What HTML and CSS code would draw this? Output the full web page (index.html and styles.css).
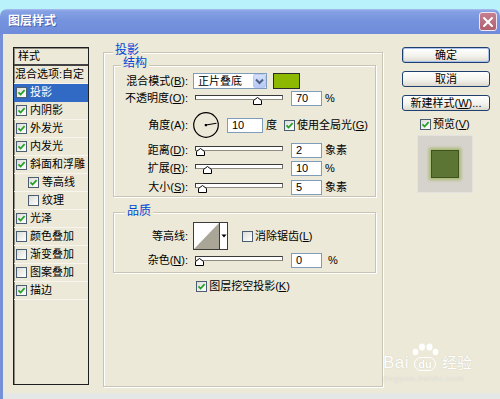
FILE: index.html
```html
<!DOCTYPE html>
<html>
<head>
<meta charset="utf-8">
<title>图层样式</title>
<link rel="stylesheet" href="styles.css">
</head>
<body>
<div class="window">
  <div class="titlebar">
    <span class="title">图层样式</span>
    <span class="close"><svg width="12" height="12" viewBox="0 0 12 12"><path d="M2 2 L10 10 M10 2 L2 10" stroke="#fff" stroke-width="2" stroke-linecap="round"/></svg></span>
  </div>
  <div class="client">
    <div class="list">
      <div class="list-head">样式</div>
      <div class="item plain">混合选项:自定</div>
      <div class="item sel"><span class="cb"><svg viewBox="0 0 9 9" width="9" height="9"><path d="M1.5 4.3 L3.6 6.5 L7.6 2.2" fill="none" stroke="#21a121" stroke-width="1.7"/></svg></span>投影</div>
      <div class="item"><span class="cb"><svg viewBox="0 0 9 9" width="9" height="9"><path d="M1.5 4.3 L3.6 6.5 L7.6 2.2" fill="none" stroke="#21a121" stroke-width="1.7"/></svg></span>内阴影</div>
      <div class="item"><span class="cb"><svg viewBox="0 0 9 9" width="9" height="9"><path d="M1.5 4.3 L3.6 6.5 L7.6 2.2" fill="none" stroke="#21a121" stroke-width="1.7"/></svg></span>外发光</div>
      <div class="item"><span class="cb"><svg viewBox="0 0 9 9" width="9" height="9"><path d="M1.5 4.3 L3.6 6.5 L7.6 2.2" fill="none" stroke="#21a121" stroke-width="1.7"/></svg></span>内发光</div>
      <div class="item"><span class="cb"><svg viewBox="0 0 9 9" width="9" height="9"><path d="M1.5 4.3 L3.6 6.5 L7.6 2.2" fill="none" stroke="#21a121" stroke-width="1.7"/></svg></span>斜面和浮雕</div>
      <div class="item sub"><span class="cb"><svg viewBox="0 0 9 9" width="9" height="9"><path d="M1.5 4.3 L3.6 6.5 L7.6 2.2" fill="none" stroke="#21a121" stroke-width="1.7"/></svg></span>等高线</div>
      <div class="item sub"><span class="cb"></span>纹理</div>
      <div class="item"><span class="cb"><svg viewBox="0 0 9 9" width="9" height="9"><path d="M1.5 4.3 L3.6 6.5 L7.6 2.2" fill="none" stroke="#21a121" stroke-width="1.7"/></svg></span>光泽</div>
      <div class="item"><span class="cb"></span>颜色叠加</div>
      <div class="item"><span class="cb"></span>渐变叠加</div>
      <div class="item"><span class="cb"></span>图案叠加</div>
      <div class="item"><span class="cb"><svg viewBox="0 0 9 9" width="9" height="9"><path d="M1.5 4.3 L3.6 6.5 L7.6 2.2" fill="none" stroke="#21a121" stroke-width="1.7"/></svg></span>描边</div>
    </div>

    <div class="panel">
      <span class="legend lg-main">投影</span>
      <div class="group g1">
        <span class="legend lg-struct">结构</span>
        <div class="row r1">
          <span class="lbl">混合模式(<u>B</u>):</span>
          <span class="select"><span class="sel-text">正片叠底</span><span class="sel-btn"><svg width="9" height="7" viewBox="0 0 9 7"><path d="M1 1.5 L4.5 5 L8 1.5" fill="none" stroke="#4d6185" stroke-width="2"/></svg></span></span>
          <span class="swatch"></span>
        </div>
        <div class="row r2">
          <span class="lbl">不透明度(<u>O</u>):</span>
          <span class="slider"><span class="track"></span><svg class="thumb" style="left:58px" width="9" height="8" viewBox="0 0 9 8"><path d="M0.5 7.5 L0.5 3.5 L4.5 0.5 L8.5 3.5 L8.5 7.5 Z" fill="#fff" stroke="#000"/></svg></span>
          <span class="num">70</span><span class="unit">%</span>
        </div>
        <div class="row r3">
          <span class="lbl">角度(A):</span>
          <svg class="dial" width="26" height="26" viewBox="0 0 26 26"><circle cx="13" cy="13" r="12.3" fill="none" stroke="#000" stroke-width="1.2"/><path d="M13 13 L23.5 11.2" stroke="#000" stroke-width="1.1"/><rect x="11.8" y="12" width="2.2" height="2.2" fill="#000"/></svg>
          <span class="num wide">10</span><span class="unit">度</span>
          <span class="cb gl"><svg viewBox="0 0 9 9" width="9" height="9"><path d="M1.5 4.3 L3.6 6.5 L7.6 2.2" fill="none" stroke="#21a121" stroke-width="1.7"/></svg></span><span class="cbtext">使用全局光(<u>G</u>)</span>
        </div>
        <div class="row r4">
          <span class="lbl">距离(<u>D</u>):</span>
          <span class="slider"><span class="track"></span><svg class="thumb" style="left:1px" width="9" height="8" viewBox="0 0 9 8"><path d="M0.5 7.5 L0.5 3.5 L4.5 0.5 L8.5 3.5 L8.5 7.5 Z" fill="#fff" stroke="#000"/></svg></span>
          <span class="num">2</span><span class="unit">象素</span>
        </div>
        <div class="row r5">
          <span class="lbl">扩展(<u>R</u>):</span>
          <span class="slider"><span class="track"></span><svg class="thumb" style="left:8px" width="9" height="8" viewBox="0 0 9 8"><path d="M0.5 7.5 L0.5 3.5 L4.5 0.5 L8.5 3.5 L8.5 7.5 Z" fill="#fff" stroke="#000"/></svg></span>
          <span class="num">10</span><span class="unit">%</span>
        </div>
        <div class="row r6">
          <span class="lbl">大小(<u>S</u>):</span>
          <span class="slider"><span class="track"></span><svg class="thumb" style="left:3px" width="9" height="8" viewBox="0 0 9 8"><path d="M0.5 7.5 L0.5 3.5 L4.5 0.5 L8.5 3.5 L8.5 7.5 Z" fill="#fff" stroke="#000"/></svg></span>
          <span class="num">5</span><span class="unit">象素</span>
        </div>
      </div>

      <div class="group g2">
        <span class="legend lg-quality">品质</span>
        <div class="row q1">
          <span class="lbl">等高线:</span>
          <span class="contour"><svg width="25" height="26" viewBox="0 0 25 26" preserveAspectRatio="none"><polygon points="0,26 25,0 25,26" fill="#a9a698"/></svg></span><span class="contour-btn"><svg width="6" height="4" viewBox="0 0 6 4"><path d="M0.5 0.5 L5.5 0.5 L3 3.5 Z" fill="#000"/></svg></span>
          <span class="cb aa"></span><span class="cbtext">消除锯齿(<u>L</u>)</span>
        </div>
        <div class="row q2">
          <span class="lbl">杂色(<u>N</u>):</span>
          <span class="slider"><span class="track"></span><svg class="thumb" style="left:0px" width="9" height="8" viewBox="0 0 9 8"><path d="M0.5 7.5 L0.5 3.5 L4.5 0.5 L8.5 3.5 L8.5 7.5 Z" fill="#fff" stroke="#000"/></svg></span>
          <span class="num">0</span><span class="unit pct">%</span>
        </div>
      </div>

      <div class="knock">
        <span class="cb"><svg viewBox="0 0 9 9" width="9" height="9"><path d="M1.5 4.3 L3.6 6.5 L7.6 2.2" fill="none" stroke="#21a121" stroke-width="1.7"/></svg></span><span class="cbtext">图层挖空投影(<u>K</u>)</span>
      </div>
    </div>

    <div class="side">
      <div class="btn def">确定</div>
      <div class="btn">取消</div>
      <div class="btn">新建样式(<u>W</u>)...</div>
      <div class="pv"><span class="cb"><svg viewBox="0 0 9 9" width="9" height="9"><path d="M1.5 4.3 L3.6 6.5 L7.6 2.2" fill="none" stroke="#21a121" stroke-width="1.7"/></svg></span><span class="cbtext">预览(<u>V</u>)</span></div>
      <div class="preview"><span class="thumbnail"></span></div>
    </div>
  </div>
  <div class="bottom"></div>

  <div class="wm">
    <div class="wm-main">
      <span class="wm-bai">Bai</span>
      <span class="paw">
        <svg width="28" height="13" viewBox="0 0 28 13"><ellipse cx="4.5" cy="9" rx="2.8" ry="3.3" fill="#fff"/><ellipse cx="11" cy="4" rx="3" ry="3.6" fill="#fff"/><ellipse cx="18.5" cy="4" rx="3" ry="3.6" fill="#fff"/><ellipse cx="24.5" cy="9" rx="2.8" ry="3.3" fill="#fff"/></svg>
        <span class="du">du</span>
      </span>
      <span class="wm-jy">经验</span>
    </div>
    <div class="wm-url">jingyan.baidu.com</div>
  </div>
</div>
</body>
</html>
```

FILE: styles.css
```css
* { box-sizing: border-box; }
html, body { margin: 0; padding: 0; }
body {
  width: 500px;
  height: 399px;
  overflow: hidden;
  background: #b9f2fb;
  font-family: "Liberation Sans", "Noto Sans CJK SC", sans-serif;
  font-size: 11px;
  line-height: 13px;
  color: #000;
}
u { text-decoration: underline; }

.window {
  position: relative;
  margin-top: 9px;
  height: 390px;
  display: flex;
  flex-direction: column;
}
.titlebar {
  height: 25px;
  flex: none;
  border-radius: 7px 7px 0 0;
  background: linear-gradient(#a8bdf0 0, #86a2e4 2px, #7693de 45%, #6e8cda 100%);
  display: flex;
  align-items: center;
  justify-content: space-between;
  padding: 0 3px 0 8px;
}
.title {
  color: #fff;
  font-weight: bold;
  font-size: 12px;
  text-shadow: 1px 1px 0 #4a62b0;
}
.close {
  width: 18px;
  height: 19px;
  border: 1px solid #efe6ee;
  border-radius: 3px;
  background: linear-gradient(#c58090, #b0606f);
  display: flex;
  align-items: center;
  justify-content: center;
}
.client {
  height: 359px;
  flex: none;
  display: flex;
  align-items: flex-start;
  background: #ece9d8;
  border-left: 3px solid #7590d6;
}
.bottom {
  height: 6px;
  flex: none;
  background: #e5e6e6;
  border-left: 3px solid #7590d6;
}

/* left style list */
.list {
  flex: none;
  margin: 13px 0 0 10px;
  width: 76px;
  height: 338px;
  border: 1px solid #1e1e1e;
  box-shadow: inset 1px 1px 0 #8c8a7e;
  background: #ece9d8;
}
.list-head {
  height: 18px;
  padding-left: 4px;
  display: flex;
  align-items: center;
  border-bottom: 2px solid #434343;
}
.item {
  height: 18px;
  display: flex;
  align-items: center;
  padding-left: 2px;
  border-bottom: 1px solid #f7f5ee;
  white-space: nowrap;
}
.item.plain { padding-left: 1px; }
.item.sub { padding-left: 14px; }
.item.sel { background: #316ac5; color: #fff; border-bottom-color: #316ac5; }
.item .cb { margin-right: 3px; }

.cb {
  flex: none;
  width: 11px;
  height: 11px;
  border: 1px solid #4b5d70;
  background: linear-gradient(135deg, #dcdcd6, #ffffff);
  display: inline-flex;
  align-items: center;
  justify-content: center;
}
.cbtext { margin-left: 2px; white-space: nowrap; }

/* main panel */
.panel {
  position: relative;
  flex: none;
  margin: 18px 0 0 14px;
  width: 280px;
  height: 335px;
  border: 1px solid #c8c5b5;
  box-shadow: inset 1px 1px 0 #fff, 1px 1px 0 #fff;
}
.legend {
  position: absolute;
  top: -9px;
  left: 9px;
  padding: 0 2px;
  background: #ece9d8;
  color: #0046d5;
  font-size: 12px;
  line-height: 13px;
}
.lg-struct { left: 7px; }
.lg-quality { left: 11px; top: -8px; }

.group {
  position: relative;
  margin: 12px 6px 0 9px;
  border: 1px solid #c8c5b5;
  box-shadow: inset 1px 1px 0 #fff, 1px 1px 0 #fff;
}
.g1 { height: 132px; padding-top: 6px; }
.g2 { height: 61px; padding-top: 9px; margin-top: 15px; }

.row {
  display: flex;
  align-items: center;
  height: 18px;
  white-space: nowrap;
}
.r2 { height: 17px; }
.r3 { height: 30px; margin-top: 3px; }
.r4 { margin-top: 1px; }
.r6 { margin-top: 1px; }
.q1 { height: 28px; }
.q2 { margin-top: 1px; }

.lbl {
  flex: none;
  width: 74px;
  text-align: right;
}
.select {
  flex: none;
  margin-left: 5px;
  width: 74px;
  height: 16px;
  border: 1px solid #7f9db9;
  background: #fff;
  display: flex;
  align-items: center;
  justify-content: space-between;
}
.sel-text { padding-left: 4px; }
.sel-btn {
  width: 13px;
  height: 14px;
  background: linear-gradient(#d4e0fb, #b6c9f5);
  border: 1px solid #b9cbf3;
  border-radius: 2px;
  display: flex;
  align-items: center;
  justify-content: center;
}
.swatch {
  flex: none;
  margin-left: 6px;
  width: 27px;
  height: 16px;
  background: #8cb800;
  border: 1px solid #2b2b2b;
}
.slider {
  position: relative;
  flex: none;
  margin-left: 7px;
  width: 88px;
  height: 12px;
}
.track {
  display: block;
  margin-top: 2px;
  height: 5px;
  background: #fff;
  border: 1px solid #3a3a3a;
  border-bottom-color: #8e8c80;
  border-right-color: #6a6a6a;
}
.thumb {
  position: absolute;
  top: 4px;
}
.num {
  flex: none;
  margin-left: 8px;
  width: 31px;
  height: 15px;
  border: 1px solid #7f9db9;
  background: #fff;
  padding-left: 4px;
  line-height: 13px;
}
.num.wide { width: 36px; }
.unit { margin-left: 3px; }
.unit.pct { margin-left: 6px; }
.dial { flex: none; margin-left: 5px; }
.cb.gl { margin-left: 7px; }

.contour {
  flex: none;
  margin-left: 5px;
  width: 27px;
  height: 28px;
  border: 1px solid #3c3c3c;
  background: #fff;
  display: block;
}
.contour svg { display: block; }
.contour-btn {
  flex: none;
  width: 8px;
  height: 28px;
  border: 1px solid #3c3c3c;
  border-left: none;
  background: #fff;
  display: flex;
  align-items: center;
  justify-content: center;
}
.cb.aa { margin-left: 14px; }

.knock {
  display: flex;
  align-items: center;
  justify-content: center;
  height: 12px;
  margin-top: 7px;
}

/* right column */
.side {
  flex: none;
  margin: 13px 0 0 19px;
  width: 88px;
}
.btn {
  height: 16px;
  margin-bottom: 8px;
  border: 1px solid #1f3f6e;
  border-radius: 3px;
  background: linear-gradient(#ffffff, #f4f3ee 55%, #dcd9cd);
  display: flex;
  align-items: center;
  justify-content: center;
  white-space: nowrap;
}
.btn.def { box-shadow: inset 0 0 0 1px #a9c1ef; }
.pv {
  display: flex;
  align-items: center;
  height: 11px;
  margin-top: 2px;
  padding-left: 18px;
}
.preview {
  margin: 5px 0 0 15px;
  width: 56px;
  height: 58px;
  background: #d6d3cc;
  border: 1px solid #e4e2dc;
  display: flex;
  align-items: center;
  justify-content: center;
}
.thumbnail {
  width: 28px;
  height: 28px;
  background: #5c7434;
  border: 1px solid #3f5220;
  box-shadow: 0 0 3px 2px #a6b870;
}

/* watermark */
.wm {
  position: absolute;
  left: 383px;
  top: 334px;
  color: #fff;
  text-shadow: 0 0 1px rgba(120, 120, 110, 0.35);
}
.wm-main {
  display: flex;
  align-items: flex-end;
}
.wm-bai {
  font-size: 17px;
  line-height: 17px;
  letter-spacing: 0.5px;
}
.paw {
  display: flex;
  flex-direction: column;
  align-items: center;
  width: 30px;
  margin-left: 1px;
}
.du {
  font-size: 11px;
  line-height: 12px;
  font-weight: bold;
  border: 1.5px solid #fff;
  border-radius: 7px;
  padding: 0 3px;
  margin-top: 1px;
}
.wm-jy {
  font-size: 15px;
  line-height: 17px;
  margin-left: 2px;
}
.wm-url {
  font-size: 8px;
  line-height: 10px;
  margin-top: 3px;
  color: rgba(255, 255, 255, 0.6);
  letter-spacing: 1px;
}
```
